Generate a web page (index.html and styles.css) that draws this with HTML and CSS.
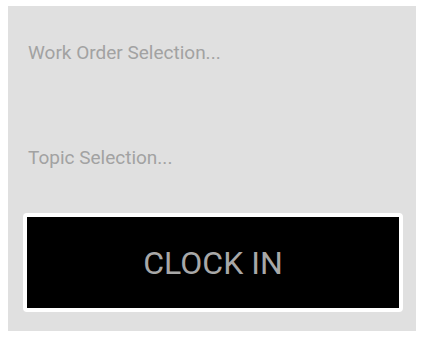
FILE: index.html
```html
<!DOCTYPE html>
<html lang="en">
<head>
    <meta charset="UTF-8">
    <meta name="viewport" content="width=device-width, initial-scale=1.0">
    <title>Clock In</title>
    <link rel="stylesheet" href="styles.css">
</head>
<body>
    <div class="panel">
        <div class="field field-first">
            <div class="placeholder">Work Order Selection...</div>
        </div>
        <div class="field field-second">
            <div class="placeholder">Topic Selection...</div>
        </div>
        <button class="clock-btn">CLOCK IN</button>
    </div>
</body>
</html>
```

FILE: styles.css
```css
body {
    margin: 6px 0 0 8px;
    background: #ffffff;
    font-family: Roboto, "Liberation Sans", sans-serif;
}

.panel {
    width: 408px;
    height: 325px;
    background: #e0e0e0;
    padding: 0 0 0 15px;
    box-sizing: border-box;
}

.field {
    padding-top: 36px;
}

.field-first {
    height: 105px;
    box-sizing: border-box;
}

.field-second {
    height: 102px;
    box-sizing: border-box;
}

.placeholder {
    padding-left: 5px;
    font-size: 19px;
    line-height: 22px;
    color: #a2a2a2;
}

.clock-btn {
    display: block;
    width: 380px;
    height: 99px;
    margin: 0;
    background: #000000;
    border: 4px solid #ffffff;
    border-radius: 4px;
    color: #a8a8a8;
    font-family: Roboto, "Liberation Sans", sans-serif;
    font-size: 32px;
    padding: 0;
    box-sizing: border-box;
}
```
